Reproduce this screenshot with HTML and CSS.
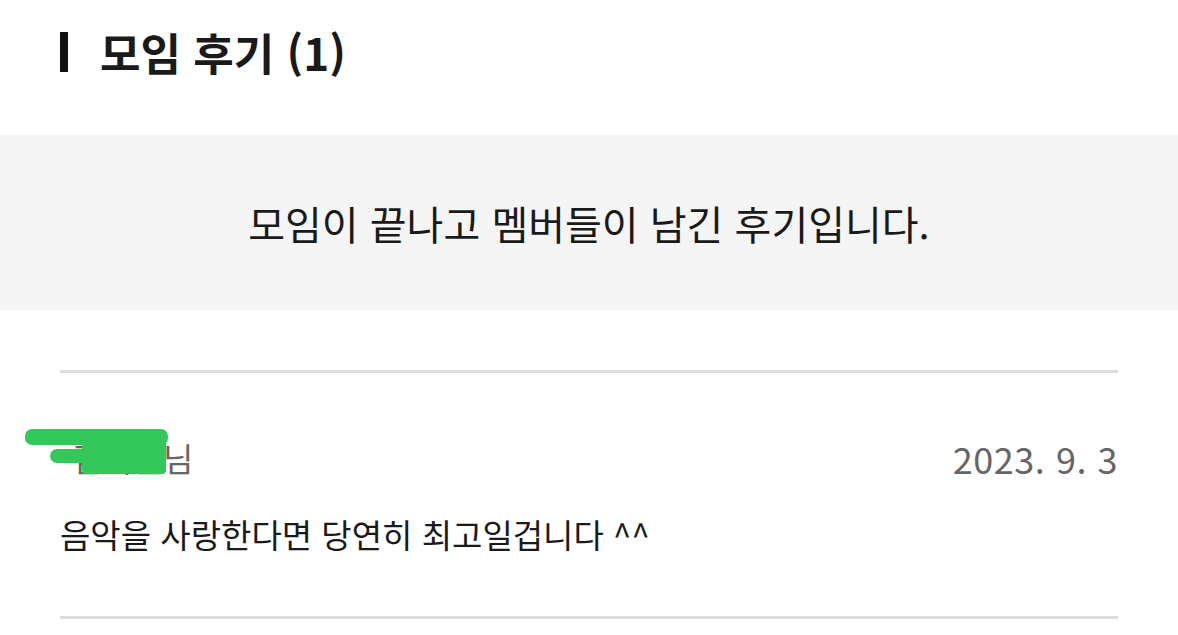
FILE: index.html
```html
<!DOCTYPE html>
<html lang="ko">
<head>
<meta charset="UTF-8" />
<meta name="viewport" content="width=device-width, initial-scale=1" />
<title>모임 후기</title>
<link rel="stylesheet" href="styles.css">
</head>
<body>

<section class="review-head">
  <h2 class="review-title">모임 후기 (1)</h2>
</section>

<div class="review-notice">
  <p>모임이 끝나고 멤버들이 남긴 후기입니다.</p>
</div>

<ul class="review-list">
  <li class="review-item">
    <div class="review-meta">
      <span class="review-name">
        <span class="masked">김회원</span>님
        <!-- name hidden with a marker scribble -->
        <svg class="scribble" width="150" height="55" viewBox="0 0 150 55">
          <g fill="#34c759">
            <rect x="5" y="6" width="143" height="16" rx="7"/>
            <rect x="62" y="14" width="84" height="37" rx="4"/>
            <rect x="30" y="26" width="40" height="14" rx="7"/>
          </g>
        </svg>
      </span>
      <span class="review-date">2023. 9. 3</span>
    </div>
    <p class="review-text">음악을 사랑한다면 당연히 최고일겁니다 ^^</p>
  </li>
</ul>

</body>
</html>
```

FILE: styles.css
```css
body {
  margin: 0;
  padding: 0;
  font-family: "Noto Sans CJK KR", "Noto Sans", sans-serif;
  background-color: #fff;
  color: #1a1a1a;
}

/* Title */
.review-head {
  padding: 22px 60px 0;
  height: 135px;
  box-sizing: border-box;
}
.review-title {
  margin: 0;
  display: flex;
  align-items: center;
  gap: 32px;
  font-size: 44px;
  font-weight: 700;
  line-height: 60px;
}
.review-title::before {
  content: "";
  width: 8px;
  height: 40px;
  background-color: #111;
}

/* Grey notice box */
.review-notice {
  background-color: #f5f5f5;
  height: 175px;
  display: flex;
  align-items: center;
  justify-content: center;
}
.review-notice p {
  margin: 0;
  font-size: 40px;
  color: #1a1a1a;
}

/* Review list */
.review-list {
  list-style: none;
  margin: 60px 60px 0;
  padding: 0;
  border-top: 3px solid #ddd;
}
.review-item {
  padding: 61px 0 58px;
  border-bottom: 3px solid #ddd;
}
.review-meta {
  display: flex;
  justify-content: space-between;
  align-items: center;
  color: #666;
  font-size: 33px;
  line-height: 48px;
}
.review-name {
  position: relative;
  padding-left: 12px;
}
.review-name .masked {
  color: #666;
}
.scribble {
  position: absolute;
  left: -40px;
  top: -11px;
  z-index: 1;
  overflow: visible;
}
.review-date {
  font-size: 36px;
  letter-spacing: 0.5px;
}
.review-text {
  margin: 28px 0 0;
  font-size: 33px;
  line-height: 48px;
  color: #1a1a1a;
}
```
